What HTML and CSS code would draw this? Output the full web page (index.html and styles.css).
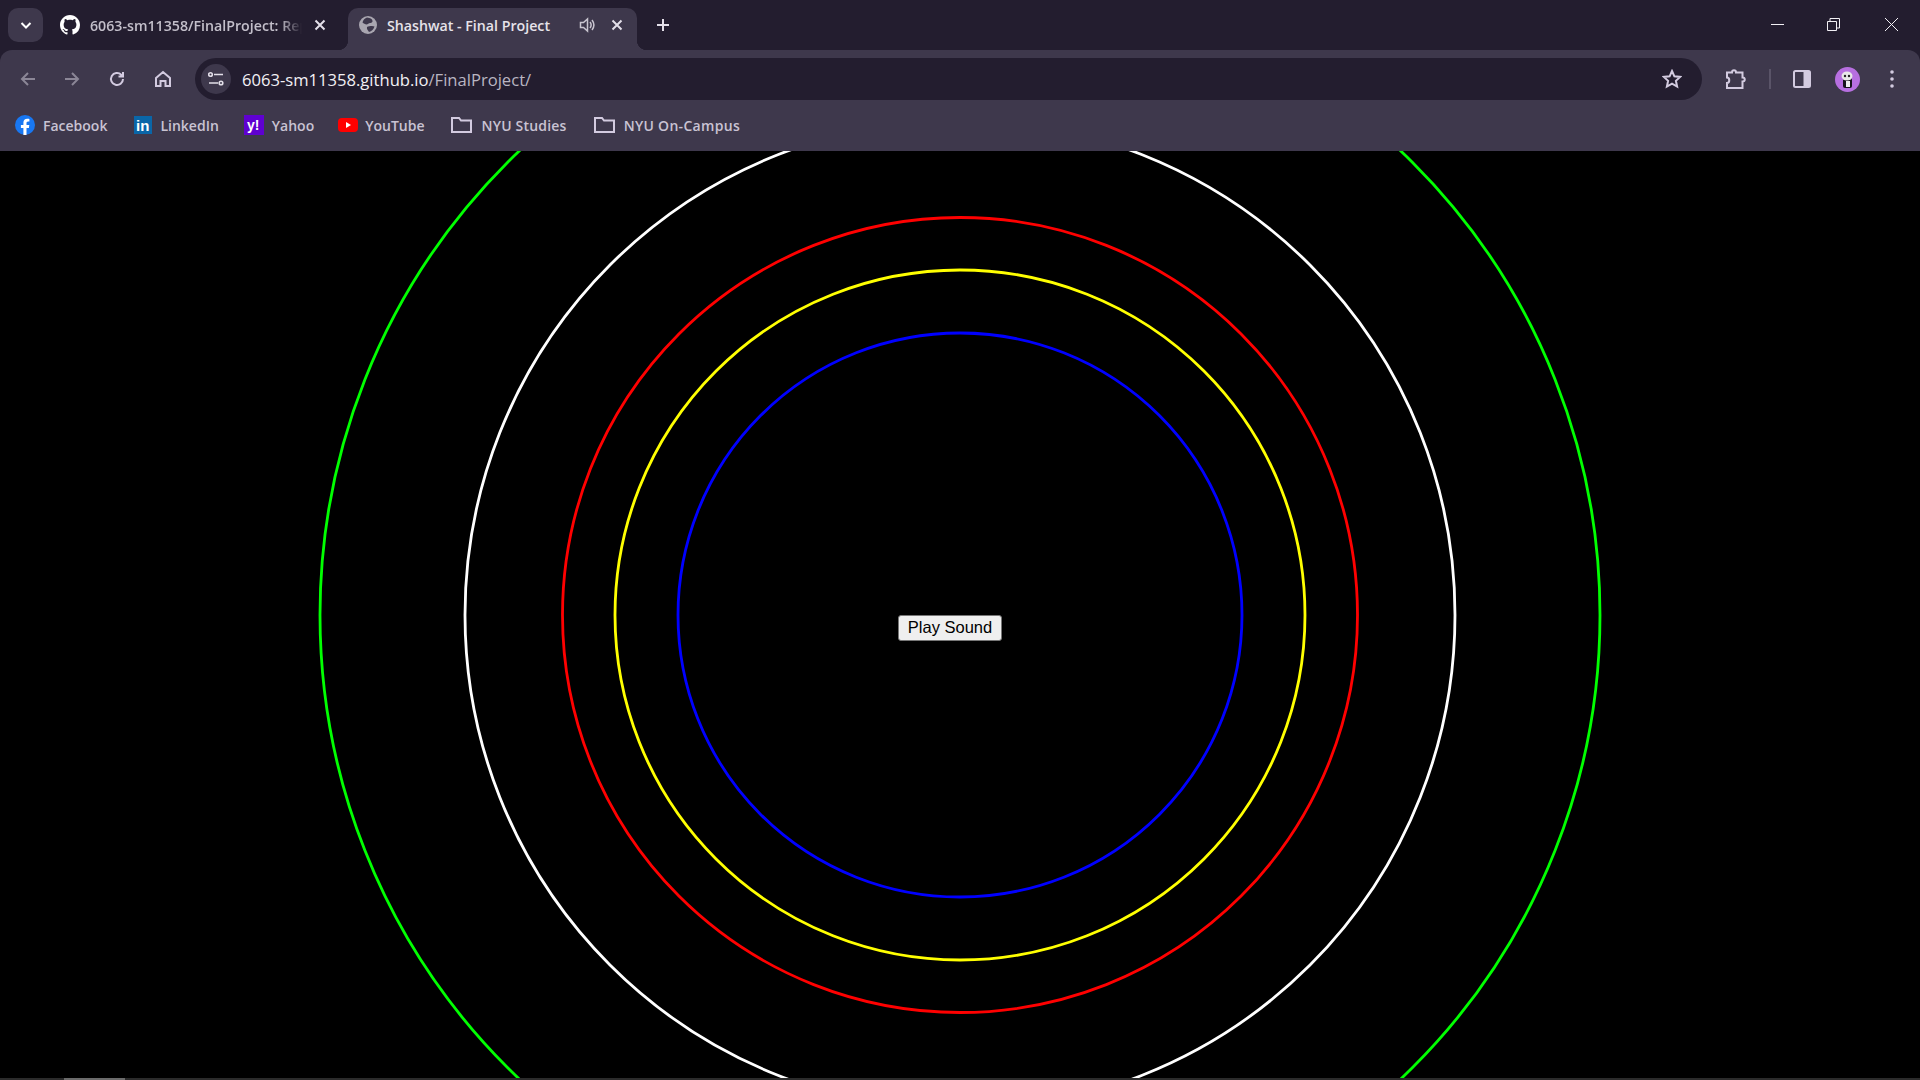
FILE: index.html
```html
<!DOCTYPE html>
<html lang="en">
<head>
    <meta charset="UTF-8">
    <title>Shashwat - Final Project</title>
    <link rel="stylesheet" href="styles.css">
</head>
<body>
    <header class="browser">
        <div class="tabstrip">
            <div class="tab-search">
                <svg width="14" height="14" viewBox="0 0 14 14"><path d="M2.5 5 7 9.5 11.5 5" class="line-white"/></svg>
            </div>
            <div class="tab">
                <svg class="favicon" width="20" height="20" viewBox="0 0 16 16"><path fill="#fff" d="M8 0C3.58 0 0 3.58 0 8c0 3.54 2.29 6.53 5.47 7.59.4.07.55-.17.55-.38 0-.19-.01-.82-.01-1.49-2.01.37-2.53-.49-2.69-.94-.09-.23-.48-.94-.82-1.13-.28-.15-.68-.52-.01-.53.63-.01 1.08.58 1.23.82.72 1.21 1.87.87 2.33.66.07-.52.28-.87.51-1.07-1.78-.2-3.64-.89-3.64-3.95 0-.87.31-1.59.82-2.15-.08-.2-.36-1.02.08-2.12 0 0 .67-.21 2.2.82.64-.18 1.32-.27 2-.27.68 0 1.36.09 2 .27 1.53-1.04 2.2-.82 2.2-.82.44 1.1.16 1.92.08 2.12.51.56.82 1.27.82 2.15 0 3.07-1.87 3.75-3.65 3.95.29.25.54.73.54 1.48 0 1.07-.01 1.93-.01 2.2 0 .21.15.46.55.38A8.013 8.013 0 0016 8c0-4.42-3.58-8-8-8z"/></svg>
                <span class="tab-title faded">6063-sm11358/FinalProject: Rep</span>
                <svg class="tab-close" width="12" height="12" viewBox="0 0 12 12"><path d="M1.5 1.5l9 9M10.5 1.5l-9 9" class="line-soft"/></svg>
            </div>
            <div class="tab tab-active">
                <svg class="favicon" width="18" height="18" viewBox="0 0 18 18"><circle cx="9" cy="9" r="9" fill="#a9a6b0"/><path fill="#3e384c" d="M8 1.5C11 2 14 3 13.5 5.5 13 7.5 10.5 6.5 9 8 7.5 9 5 8 3.5 6.5 4 4 6 2 8 1.5zM8 11c2-1 6-1.5 7.5-.5-.5 2.500-3 5-5.500 5.500C9 14.500 7.500 13 8 11z"/></svg>
                <span class="tab-title">Shashwat - Final Project</span>
                <svg class="tab-audio" width="16" height="16" viewBox="0 0 16 16"><path d="M1.500 5.500h3L8.500 2v12l-4-3.500h-3z" class="line-thin"/><path d="M11 5c1.300 1.700 1.300 4.300 0 6M13 3c2.300 3 2.300 7 0 10" class="line-thin"/></svg>
                <svg class="tab-close" width="12" height="12" viewBox="0 0 12 12"><path d="M1.500 1.500l9 9M10.500 1.500l-9 9" class="line-soft"/></svg>
            </div>
            <svg class="new-tab" width="14" height="14" viewBox="0 0 14 14"><path d="M7 1v12M1 7h12" class="line-soft"/></svg>
            <div class="window-controls">
                <svg width="13" height="13" viewBox="0 0 13 13"><path d="M0 6.500h13" class="line-window"/></svg>
                <svg width="13" height="13" viewBox="0 0 13 13"><path d="M.5 3.500h9v9h-9zM3 3.500V.5h9.500V10H9.500" class="line-window"/></svg>
                <svg width="13" height="13" viewBox="0 0 13 13"><path d="M0 0l13 13M13 0L0 13" class="line-window"/></svg>
            </div>
        </div>

        <div class="toolbar">
            <div class="nav-row">
                <svg class="nav-icon" width="16" height="16" viewBox="0 0 16 16"><path d="M15 8H2M8 2 2 8l6 6" class="line-dim"/></svg>
                <svg class="nav-icon" width="16" height="16" viewBox="0 0 16 16"><path d="M1 8h13M8 2l6 6-6 6" class="line-dim"/></svg>
                <svg class="nav-icon" width="18" height="18" viewBox="0 0 18 18"><path d="M15 9a6 6 0 1 1-1.800-4.300L15 6.500M15 2v4.500h-4.500" class="line-light"/></svg>
                <svg class="nav-icon" width="18" height="18" viewBox="0 0 18 18"><path d="M2 8 9 2l7 6v8h-4.500v-5h-5v5H2z" class="line-light"/></svg>
            </div>
            <div class="omnibox">
                <div class="site-chip">
                    <svg width="16" height="16" viewBox="0 0 16 16"><path d="M6 3.500h9M1 12h9" class="line-chip"/><circle cx="2.500" cy="3.500" r="1.800" class="line-chip"/><circle cx="13" cy="12" r="1.800" class="line-chip"/></svg>
                </div>
                <span class="url">6063-sm11358.github.io<span class="url-path">/FinalProject/</span></span>
                <svg class="star" width="20" height="20" viewBox="0 0 20 20"><path d="M10 2l2.400 5.300 5.800.6-4.300 3.900 1.200 5.700L10 14.600 4.900 17.500l1.200-5.700L1.800 7.900l5.800-.6z" class="line-light"/></svg>
            </div>
            <div class="tools">
                <svg class="tool-ext" width="22" height="22" viewBox="0 0 22 22"><path d="M2 4.500h5c0-3 4-3 4 0h6.500v5c3 0 3 4 0 4v6.500H2v-5c3 0 3-5.500 0-5.500z" class="line-light"/></svg>
                <span class="tool-divider"></span>
                <svg class="tool-panel" width="18" height="18" viewBox="0 0 18 18"><rect x="1" y="1" width="16" height="16" rx="1.500" class="line-light"/><rect x="10.500" y="1" width="6.500" height="16" fill="#d3cbe0"/></svg>
                <svg class="avatar" width="25" height="25" viewBox="0 0 25 25"><circle cx="12.500" cy="12.500" r="12.500" fill="#b76fe0"/><rect x="8" y="11" width="9" height="10" rx="2" fill="#17141c"/><rect x="11" y="14" width="4" height="6" fill="#eee"/><ellipse cx="12" cy="9" rx="5.500" ry="4.500" fill="#e8e8e8"/><circle cx="10" cy="9" r="1.200" fill="#222"/><circle cx="14" cy="9" r="1.200" fill="#222"/></svg>
                <svg class="menu" width="4" height="18" viewBox="0 0 4 18"><circle cx="2" cy="2" r="1.800" fill="#d3cbe0"/><circle cx="2" cy="9" r="1.800" fill="#d3cbe0"/><circle cx="2" cy="16" r="1.800" fill="#d3cbe0"/></svg>
            </div>
        </div>

        <nav class="bookmarks">
            <a class="bookmark bm-facebook">
                <svg width="20" height="20" viewBox="0 0 20 20"><circle cx="10" cy="10" r="10" fill="#1877f2"/><path fill="#fff" d="M13.900 12.900l.4-2.900h-2.800V8.100c0-.8.400-1.600 1.600-1.600h1.300V4s-1.100-.2-2.200-.2c-2.300 0-3.800 1.400-3.800 3.900V10H5.900v2.900h2.500V20h3.100v-7.100z"/></svg>
                Facebook
            </a>
            <a class="bookmark bm-linkedin">
                <svg width="18" height="18" viewBox="0 0 18 18"><rect width="18" height="18" fill="#0a66a8"/><text class="logo-in" x="2" y="15">in</text></svg>
                LinkedIn
            </a>
            <a class="bookmark bm-yahoo">
                <svg width="20" height="20" viewBox="0 0 20 20"><rect width="20" height="20" fill="#5f01d1"/><text class="logo-y" x="3" y="15">y!</text></svg>
                Yahoo
            </a>
            <a class="bookmark bm-youtube">
                <svg width="20" height="14" viewBox="0 0 20 14"><rect width="20" height="14" rx="4" fill="#f00"/><path d="M8 4l5 3-5 3z" fill="#fff"/></svg>
                YouTube
            </a>
            <a class="bookmark bm-studies">
                <svg width="21" height="18" viewBox="0 0 21 18"><path d="M1 2h7l2 2.500h10V16H1z" class="line-light"/></svg>
                NYU Studies
            </a>
            <a class="bookmark bm-campus">
                <svg width="21" height="18" viewBox="0 0 21 18"><path d="M1 2h7l2 2.500h10V16H1z" class="line-light"/></svg>
                NYU On-Campus
            </a>
        </nav>
    </header>

    <main class="stage">
        <svg class="rings" width="1920" height="927" viewBox="0 0 1920 927">
            <circle cx="960" cy="464" r="640" stroke="#0f0"/>
            <circle cx="960" cy="464" r="495" stroke="#fff"/>
            <circle cx="960" cy="464" r="397.500" stroke="#f00"/>
            <circle cx="960" cy="464" r="345" stroke="#ff0"/>
            <circle cx="960" cy="464" r="282" stroke="#00f"/>
        </svg>
        <button class="play">Play Sound</button>
    </main>
    <div class="scrollbar"><span class="scrollbar-thumb"></span></div>
</body>
</html>
```
FILE: styles.css
```css
/* browser frame */
html, body {
    margin: 0;
    padding: 0;
    height: 100%;
    overflow: hidden;
    background-color: #000;
}
body {
    display: flex;
    flex-direction: column;
    font-family: 'Open Sans', 'Noto Sans', sans-serif;
}
svg {
    display: block;
    flex: none;
}
.line-white, .line-soft, .line-thin, .line-window, .line-dim, .line-light, .line-chip {
    fill: none;
    stroke-width: 2;
}
.line-white { stroke: #fff; }
.line-soft { stroke: #e3dfe9; }
.line-thin { stroke: #c9c5d0; stroke-width: 1.5; }
.line-window { stroke: #f2f0f5; stroke-width: 1; }
.line-dim { stroke: #8b8696; }
.line-light { stroke: #d3cbe0; }
.line-chip { stroke: #e3dfe9; stroke-width: 1.6; }

.browser {
    flex: none;
    background-color: #231d2f;
}
.tabstrip {
    height: 50px;
    display: flex;
    align-items: flex-end;
    position: relative;
}
.tab-search {
    width: 35px;
    height: 34px;
    margin: 0 0 8px 8px;
    border-radius: 10px;
    background-color: #3e384c;
    display: flex;
    align-items: center;
    justify-content: center;
}
.tab {
    height: 42px;
    box-sizing: border-box;
    display: flex;
    align-items: center;
    position: relative;
    width: 296px;
    padding: 0 13px 8px 17px;
    font-size: 14.2px;
    font-weight: 600;
    color: #c3bfca;
}
.tab-active {
    width: 289px;
    background-color: #3e384c;
    border-radius: 10px 10px 0 0;
    color: #e6e3ea;
    padding-left: 11px;
    padding-right: 14px;
    margin-left: 9px;
}
.tab-active::before, .tab-active::after {
    content: "";
    position: absolute;
    bottom: 0;
    width: 10px;
    height: 10px;
}
.tab-active::before {
    left: -10px;
    background: radial-gradient(circle at 0 0, transparent 10px, #3e384c 10.5px);
}
.tab-active::after {
    right: -10px;
    background: radial-gradient(circle at 100% 0, transparent 10px, #3e384c 10.5px);
}
.favicon {
    margin-right: 10px;
}
.tab-title {
    flex: 1;
    min-width: 0;
    white-space: nowrap;
    overflow: hidden;
}
.faded {
    -webkit-mask-image: linear-gradient(to right, #000 190px, transparent 212px);
    mask-image: linear-gradient(to right, #000 190px, transparent 212px);
}
.tab-close {
    margin-left: 16px;
}
.tab:not(.tab-active) .tab-close {
    margin-left: 6px;
}
.new-tab {
    margin: 0 0 18px 19px;
}
.window-controls {
    margin-left: auto;
    display: flex;
    gap: 42px;
    padding: 0 22px 19px 0;
    align-self: flex-end;
}
.window-controls svg {
    margin-left: 1px;
}
.window-controls svg:last-child {
    margin-left: 3px;
}

.toolbar {
    height: 58px;
    box-sizing: border-box;
    padding-top: 8px;
    background-color: #3e384c;
    border-radius: 12px 12px 0 0;
    display: flex;
    align-items: flex-start;
}
.nav-row {
    width: 195px;
    height: 42px;
    display: flex;
    align-items: center;
    gap: 28px;
    padding-left: 20px;
    box-sizing: border-box;
}
.omnibox {
    width: 1507px;
    height: 42px;
    border-radius: 21px;
    background-color: #231d2f;
    display: flex;
    align-items: center;
    padding: 0 20px 0 6px;
    box-sizing: border-box;
}
.site-chip {
    width: 30px;
    height: 30px;
    border-radius: 50%;
    background-color: #3e384c;
    display: flex;
    align-items: center;
    justify-content: center;
    margin-right: 11px;
}
.url {
    flex: 1;
    font-size: 16.6px;
    color: #f2f0f5;
    white-space: nowrap;
    padding-top: 1px;
}
.url-path {
    color: #b9b5c2;
}
.tools {
    height: 42px;
    flex: 1;
    display: flex;
    align-items: center;
}
.tool-ext {
    margin-left: 23px;
}
.tool-divider {
    width: 2px;
    height: 20px;
    background-color: #5a5468;
    margin-left: 22px;
}
.tool-panel {
    margin-left: 22px;
}
.avatar {
    margin-left: 24px;
}
.menu {
    margin-left: 30px;
}

.bookmarks {
    height: 43px;
    background-color: #3e384c;
    display: flex;
    align-items: center;
    font-size: 14px;
    font-weight: 600;
    color: #c9c3d3;
    padding-bottom: 9px;
    box-sizing: border-box;
}
.bookmark {
    display: flex;
    align-items: center;
    gap: 8px;
    white-space: nowrap;
}
.bm-facebook { margin-left: 15px; }
.bm-linkedin { margin-left: 27px; }
.bm-yahoo { margin-left: 25px; }
.bm-youtube { margin-left: 24px; gap: 7px; }
.bm-studies { margin-left: 26px; gap: 10px; letter-spacing: 0.2px; }
.bm-campus { margin-left: 27px; gap: 9px; letter-spacing: 0.3px; }
.logo-in, .logo-y {
    font-family: 'Liberation Sans', sans-serif;
    font-weight: 700;
    fill: #fff;
}
.logo-in { font-size: 15px; }
.logo-y { font-size: 14px; }

/* page under the frame */
.stage {
    flex: 1;
    position: relative;
    overflow: hidden;
    background-color: #000;
}
.rings {
    position: absolute;
    left: 0;
    top: 0;
}
.rings circle {
    fill: none;
    stroke-width: 2.8;
}
.play {
    position: absolute;
    left: 898px;
    top: 464px;
    width: 104px;
    height: 26px;
    padding: 0 0 1px;
    font-family: 'Liberation Sans', Arial, sans-serif;
    font-size: 16.5px;
    color: #000;
    background-color: #efefef;
    border: 1px solid #767676;
    border-radius: 3px;
}
.scrollbar {
    flex: none;
    height: 2px;
    background-color: #2b2b2b;
    padding-left: 64px;
}
.scrollbar-thumb {
    display: block;
    width: 61px;
    height: 2px;
    background-color: #6b6b6b;
}
```
